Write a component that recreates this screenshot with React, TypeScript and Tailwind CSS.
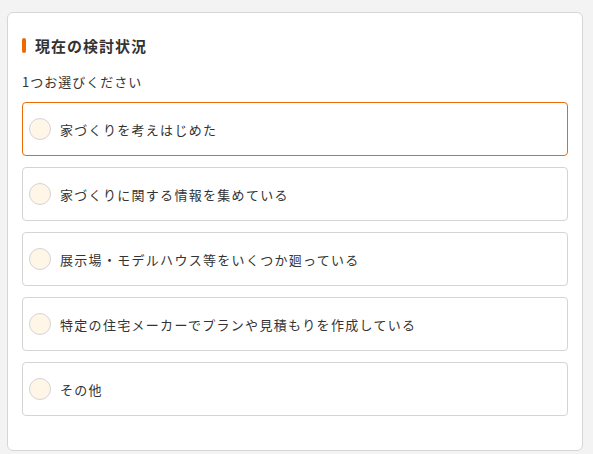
import React from "react";

const options = [
  "家づくりを考えはじめた",
  "家づくりに関する情報を集めている",
  "展示場・モデルハウス等をいくつか廻っている",
  "特定の住宅メーカーでプランや見積もりを作成している",
  "その他",
];

const App = () => {
  return (
    <div
      className="w-[593px] h-[454px] bg-[#f3f3f3] pt-[12px] pl-[7px] text-[#333]"
      style={{ fontFamily: '"Noto Sans CJK JP", "Noto Sans", sans-serif' }}
    >
      <div className="w-[576px] h-[439px] bg-white border border-[#d6d6d6] rounded-[6px] pt-[22px] px-[14px]">
        {/* title */}
        <div className="flex items-center gap-[9px] h-[20px]">
          <div className="w-[4px] h-[15px] rounded-full bg-[#ee6a00]"></div>
          <h1 className="text-[15px] font-bold tracking-[1px] leading-none">現在の検討状況</h1>
        </div>
        <p className="mt-[20px] text-[13px] tracking-[1px] leading-none">1つお選びください</p>

        <div className="mt-[14px] flex flex-col gap-[11px]">
          {options.map((label, i) => (
            <label
              key={label}
              className={
                i === 0
                  ? "h-[54px] flex items-center gap-[9px] px-[6px] rounded-[4px] border border-[#ee6a00]"
                  : "h-[54px] flex items-center gap-[9px] px-[6px] rounded-[4px] border border-[#d4d4d4]"
              }
            >
              <span className="w-[22px] h-[22px] rounded-full bg-[#fff6e8] border border-[#d4d4d4] shrink-0"></span>
              <span className="text-[13px] tracking-[1.3px] leading-none">{label}</span>
            </label>
          ))}
        </div>
      </div>
    </div>
  );
};

export default App;
